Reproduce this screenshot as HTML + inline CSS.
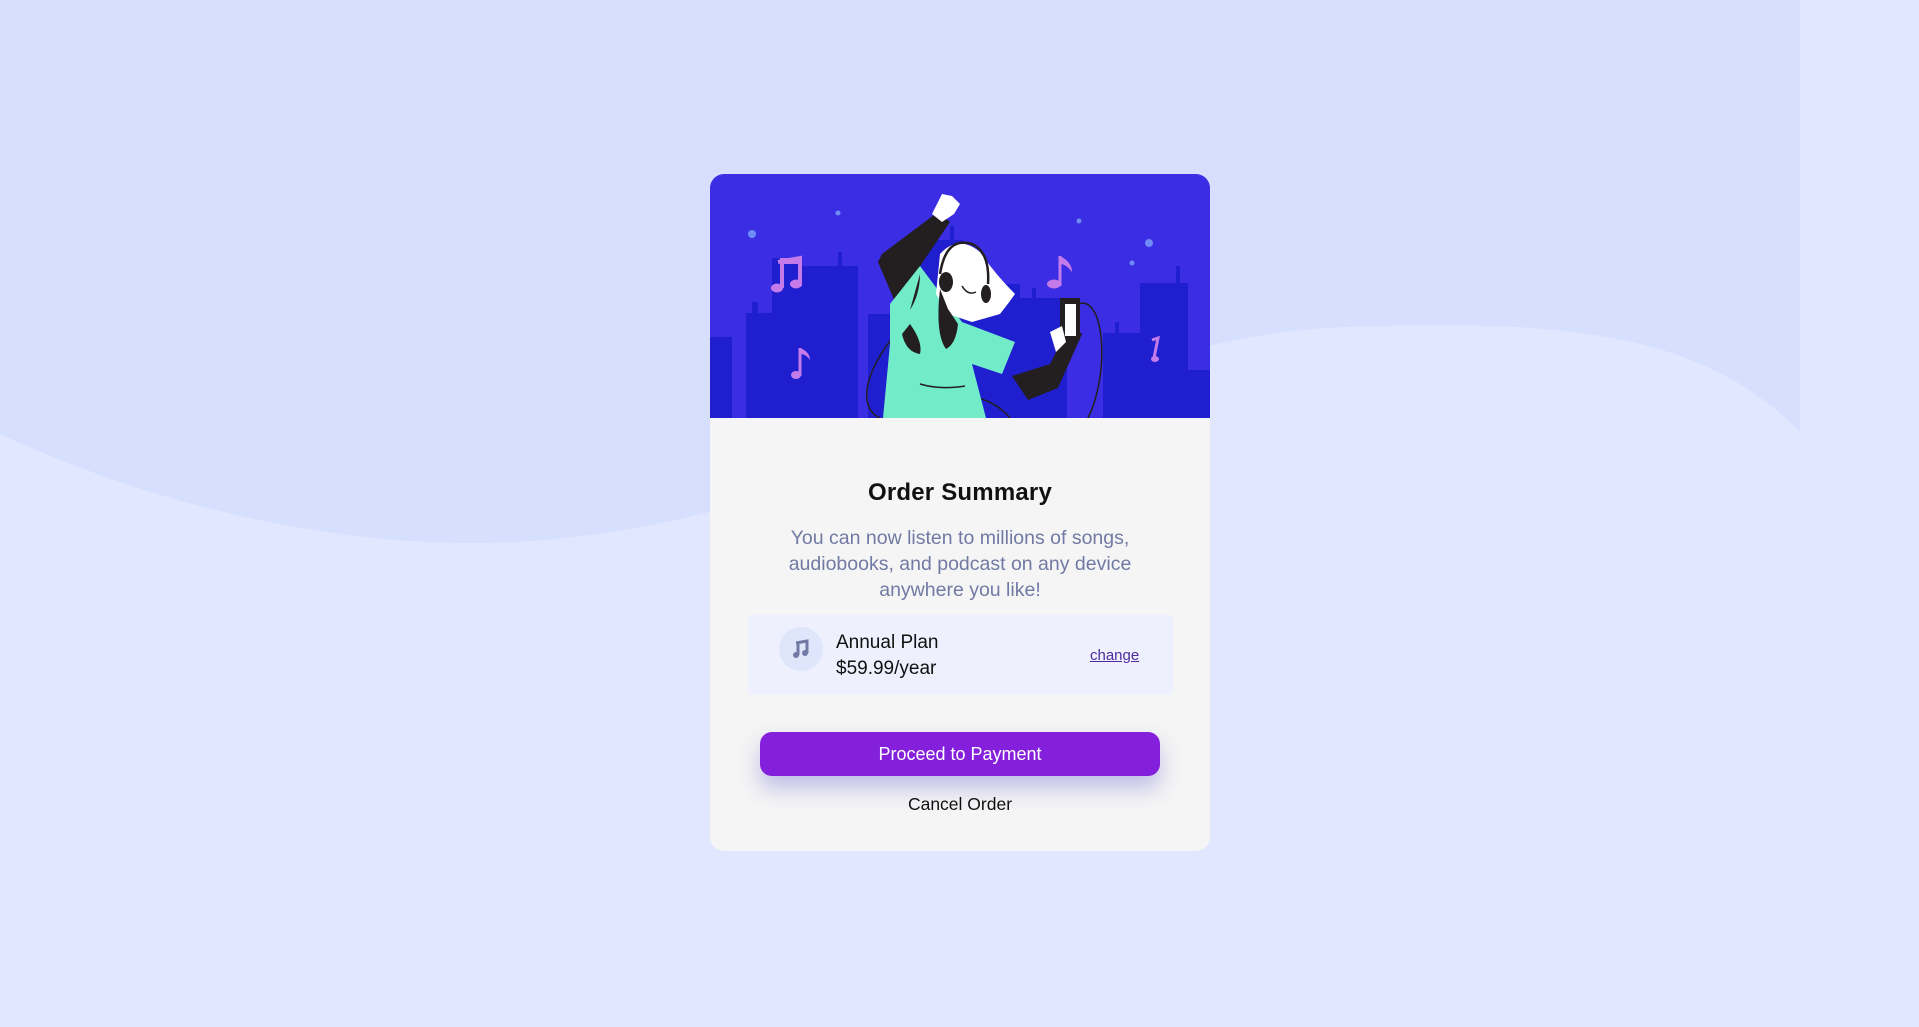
<!DOCTYPE html>
<html><head><meta charset="utf-8">
<style>
html,body{margin:0;padding:0;width:1919px;height:1027px;overflow:hidden;background:#e0e7fe;font-family:"Liberation Sans",Arial,sans-serif;}
.bg{position:absolute;left:0;top:0;}
.card{position:absolute;left:710px;top:174px;width:500px;height:677px;background:#f5f5f5;border-radius:14px;overflow:hidden;}
.hero{position:absolute;left:0;top:0;width:500px;height:244px;}
h1{position:absolute;top:305px;left:0;width:500px;text-align:center;margin:0;font-size:24px;font-weight:bold;color:#111;letter-spacing:0.2px}
.p{position:absolute;top:351px;left:60px;width:380px;text-align:center;font-size:19.5px;line-height:26px;color:#717aa4;}
.plan{position:absolute;left:38px;top:441px;width:425px;height:80px;background:#eef1fd;border-radius:4px;}
.ic{position:absolute;left:31px;top:12px;width:44px;height:44px;border-radius:50%;background:#dfe6fb;}
.t1{position:absolute;left:88px;top:17px;font-size:19px;color:#111;}
.t2{position:absolute;left:88px;top:43px;font-size:19px;color:#111;}
.ch{position:absolute;left:342px;top:32px;font-size:15px;color:#4d2a9e;text-decoration:underline;}
.btn{position:absolute;left:50px;top:558px;width:400px;height:44px;border-radius:12px;background:#841fdc;color:#fff;font-size:18px;text-align:center;line-height:44px;box-shadow:0 12px 22px rgba(70,60,200,0.3);}
.cancel{position:absolute;left:0;top:620px;width:500px;text-align:center;font-size:17.5px;color:#111;}
</style></head><body>
<svg class="bg" width="1919" height="1027" viewBox="0 0 1919 1027">
<path d="M0 0 H1800 V432 C1700 330 1560 320 1346 327 C1050 337 800 560 428 542 C250 533 100 480 0 434 Z" fill="#d6e0fe"/>
</svg>
<div class="card">
<svg class="hero" width="500" height="244" viewBox="0 0 500 244">
<rect width="500" height="244" fill="#3a2de3"/>
<g fill="#1f1fd0">
<rect x="0" y="163" width="22" height="81"/>
<rect x="36" y="139" width="28" height="105"/>
<rect x="42" y="128" width="6" height="12"/>
<rect x="62" y="84" width="30" height="160"/>
<rect x="88" y="92" width="60" height="152"/>
<rect x="128" y="78" width="4" height="16"/>
<rect x="158" y="140" width="40" height="104"/>
<rect x="203" y="66" width="50" height="178"/>
<rect x="240" y="52" width="4" height="16"/>
<rect x="250" y="110" width="60" height="134"/>
<rect x="307" y="124" width="50" height="120"/>
<rect x="322" y="114" width="4" height="12"/>
<rect x="393" y="159" width="40" height="85"/>
<rect x="405" y="148" width="4" height="12"/>
<rect x="430" y="109" width="48" height="135"/>
<rect x="466" y="92" width="4" height="18"/>
<rect x="470" y="196" width="30" height="48"/>
</g>
<g fill="#6f8cf6"><circle cx="42" cy="60" r="4"/><circle cx="128" cy="39" r="2.5"/><circle cx="369" cy="47" r="2.5"/><circle cx="439" cy="69" r="4"/><circle cx="422" cy="89" r="2.5"/></g>
<g fill="#c47ae8">
<path d="M68 88 L90 84 V112 M72 88 V114" stroke="#c47ae8" stroke-width="4" fill="none"/>
<rect x="70" y="84" width="20" height="6"/>
<ellipse cx="67" cy="114" rx="6" ry="4.5"/><ellipse cx="86" cy="110" rx="6" ry="4.5"/>
<path d="M90 174 V202" stroke="#c47ae8" stroke-width="3"/><path d="M90 174 Q100 178 100 186 Q96 180 90 180Z"/><ellipse cx="86" cy="201" rx="5" ry="4"/>
<path d="M350 82 V112" stroke="#c47ae8" stroke-width="3"/><path d="M350 82 Q362 88 362 98 Q356 90 350 90Z"/><ellipse cx="344" cy="110" rx="7" ry="4.5"/>
<path d="M442 166 L448 164 L444 184" stroke="#c47ae8" stroke-width="3" fill="none"/><ellipse cx="445" cy="185" rx="4" ry="3"/>
</g>
<path d="M238 110 C160 170 140 230 170 244 M198 244 C240 210 280 220 300 244 M368 130 C395 120 400 200 378 244" stroke="#231f20" stroke-width="1.5" fill="none"/>
<path d="M172 80 L228 38 L240 48 L202 104 L185 128 L168 88 Z" fill="#231f20"/>
<path d="M222 40 L232 20 L242 22 L250 30 L244 40 L232 48 Z" fill="#fff"/>
<path d="M180 130 L210 92 L252 148 L305 168 L292 200 L262 190 L276 244 L173 244 L180 170 Z" fill="#72ebc9"/>
<path d="M200 150 Q213 168 210 180 Q196 178 192 160Z" fill="#231f20"/>
<path d="M200 136 Q210 120 210 100 Z" fill="#231f20"/>
<path d="M230 80 Q248 60 270 78 Q285 100 305 120 Q298 130 290 140 L262 148 L238 140 L226 120 Z" fill="#fff"/>
<path d="M230 115 Q225 160 236 175 Q246 170 248 150 L238 135 Z" fill="#231f20"/>
<path d="M230 100 Q236 62 262 70 Q280 78 278 110" stroke="#231f20" stroke-width="2.5" fill="none"/>
<ellipse cx="236" cy="108" rx="7" ry="10" fill="#231f20"/><ellipse cx="276" cy="120" rx="5" ry="9" fill="#231f20"/>
<path d="M252 112 Q258 122 266 118" stroke="#231f20" stroke-width="1.5" fill="none"/>
<path d="M302 202 L340 190 L360 150 L372 160 L348 214 L318 226 Z" fill="#231f20"/>
<rect x="350" y="124" width="20" height="42" fill="#231f20"/><rect x="355" y="130" width="11" height="32" fill="#fff"/>
<path d="M340 158 L352 152 L356 168 L346 178 Z" fill="#fff"/>
<path d="M210 210 Q230 216 255 212" stroke="#231f20" stroke-width="1.5" fill="none"/>
</svg>
<h1>Order Summary</h1>
<div class="p">You can now listen to millions of songs, audiobooks, and podcast on any device anywhere you like!</div>
<div class="plan">
<div class="ic"><svg width="44" height="44" viewBox="0 0 44 44"><path d="M17 16 L28 14 V26 M19 16 V28" stroke="#717aa4" stroke-width="3" fill="none"/><circle cx="17" cy="28" r="3" fill="#717aa4"/><circle cx="26" cy="26" r="3" fill="#717aa4"/></svg></div>
<div class="t1">Annual Plan</div>
<div class="t2">$59.99/year</div>
<div class="ch">change</div>
</div>
<div class="btn">Proceed to Payment</div>
<div class="cancel">Cancel Order</div>
</div>
</body></html>
